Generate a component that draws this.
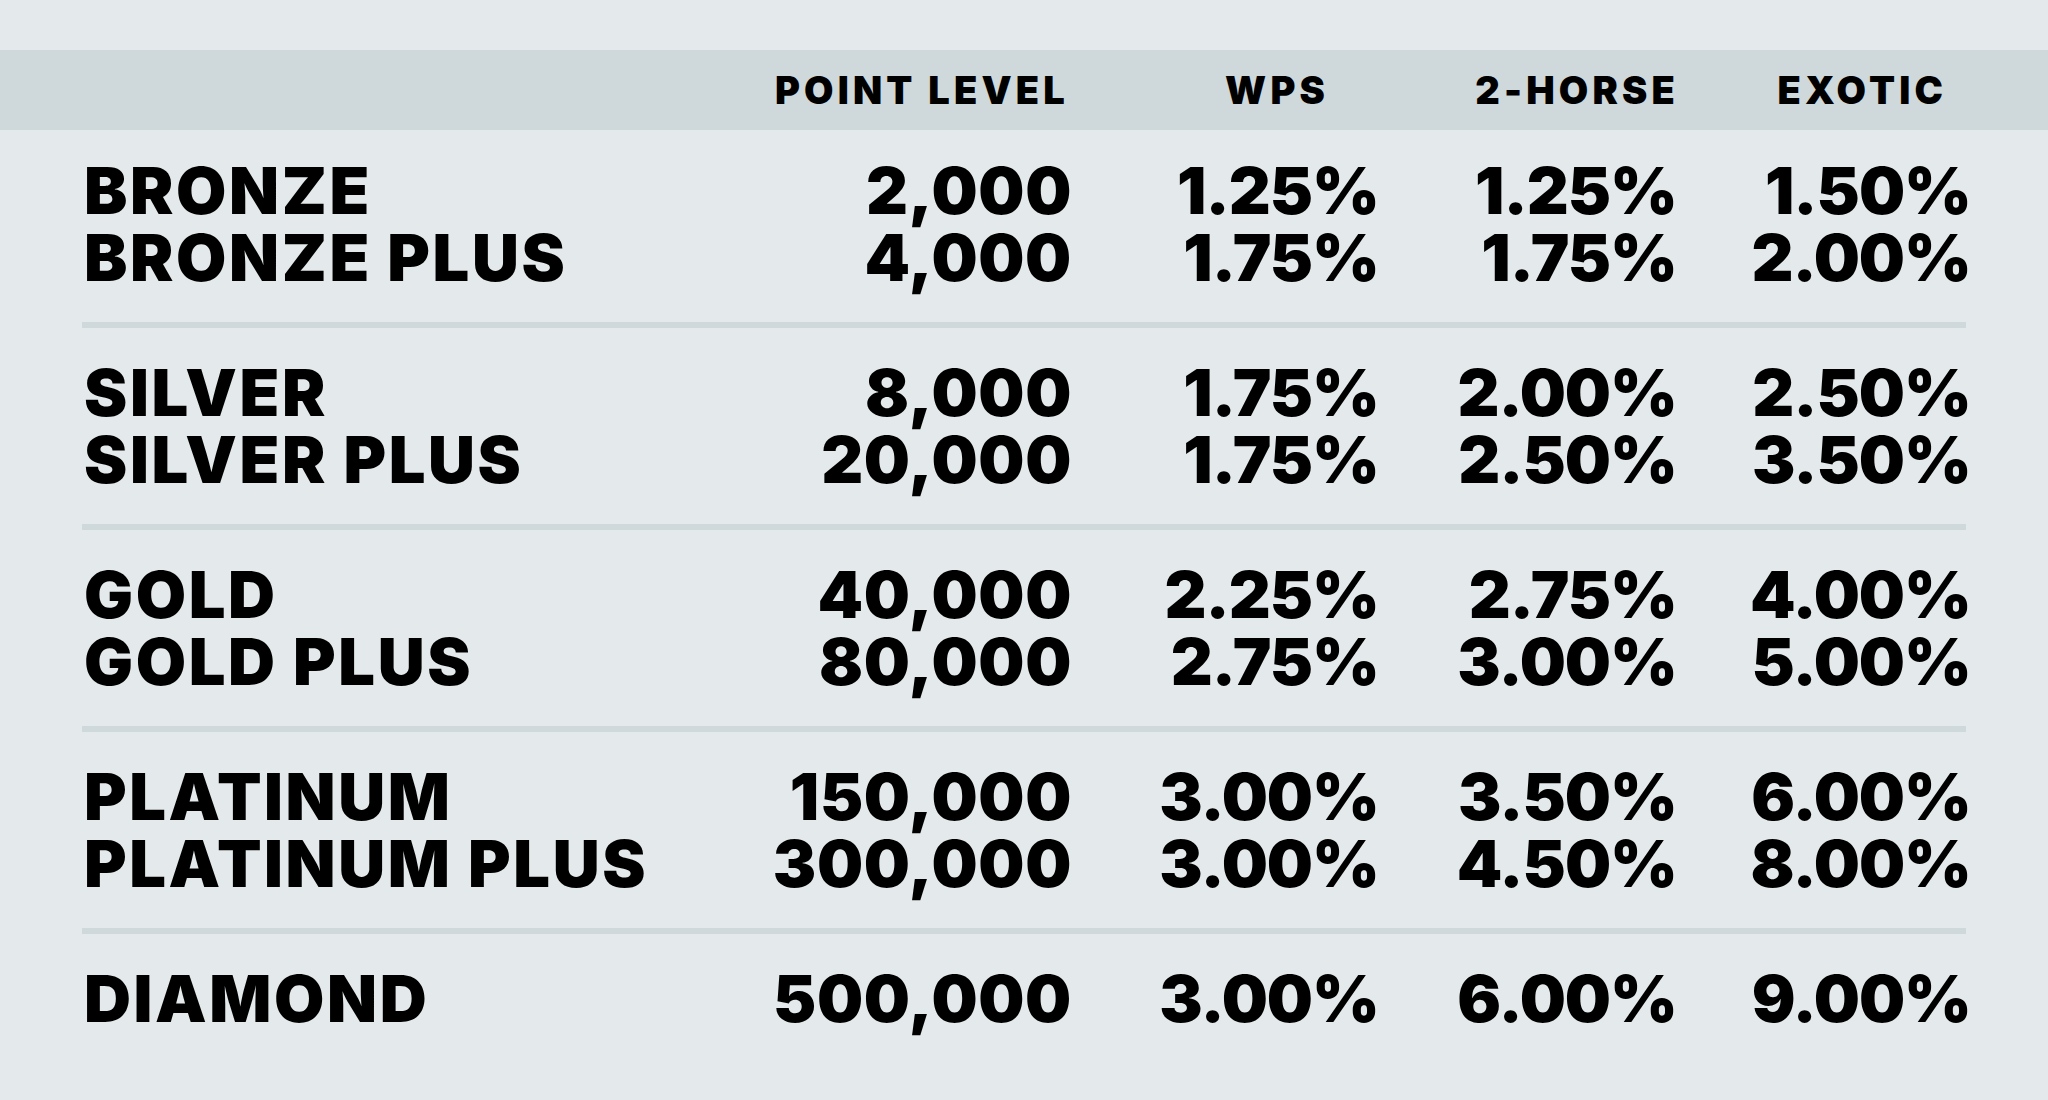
import React from "react";

type Tier = { name: string; points: string; wps: string; twoHorse: string; exotic: string };

const groups: Tier[][] = [
  [
    { name: "BRONZE", points: "2,000", wps: "1.25%", twoHorse: "1.25%", exotic: "1.50%" },
    { name: "BRONZE PLUS", points: "4,000", wps: "1.75%", twoHorse: "1.75%", exotic: "2.00%" },
  ],
  [
    { name: "SILVER", points: "8,000", wps: "1.75%", twoHorse: "2.00%", exotic: "2.50%" },
    { name: "SILVER PLUS", points: "20,000", wps: "1.75%", twoHorse: "2.50%", exotic: "3.50%" },
  ],
  [
    { name: "GOLD", points: "40,000", wps: "2.25%", twoHorse: "2.75%", exotic: "4.00%" },
    { name: "GOLD PLUS", points: "80,000", wps: "2.75%", twoHorse: "3.00%", exotic: "5.00%" },
  ],
  [
    { name: "PLATINUM", points: "150,000", wps: "3.00%", twoHorse: "3.50%", exotic: "6.00%" },
    { name: "PLATINUM PLUS", points: "300,000", wps: "3.00%", twoHorse: "4.50%", exotic: "8.00%" },
  ],
  [{ name: "DIAMOND", points: "500,000", wps: "3.00%", twoHorse: "6.00%", exotic: "9.00%" }],
];

const cols = "grid grid-cols-[1fr_300px_307px_298px_294px]";

export default function App() {
  return (
    <div
      className="min-h-screen w-full bg-[#e4eaeb] pt-[50px] text-black"
      style={{ fontFamily: "Inter, 'Liberation Sans', sans-serif" }}
    >
      <div className="bg-[#cfd8db] h-[80px] pl-[82px] pr-[77px]">
        <div className={`${cols} h-full items-center text-[38px] font-black tracking-[0.11em] leading-none`}>
          <div />
          <div className="text-right pr-[3px]">POINT LEVEL</div>
          <div className="text-right pr-[50px]">WPS</div>
          <div className="text-right -mr-[2px]">2-HORSE</div>
          <div className="text-right pr-[24px]">EXOTIC</div>
        </div>
      </div>

      <div className="pl-[82px] pr-[77px]">
        {groups.map((g, i) => (
          <React.Fragment key={i}>
            {i > 0 && <div className="h-[6px] bg-[#cfd8db] mr-[5px]" />}
            <div className={i === 0 ? "pt-[27px] pb-[31px]" : "pt-[31px] pb-[31px]"}>
              {g.map((t) => (
                <div key={t.name} className={`${cols} text-[65px] font-black leading-[67px]`}>
                  <div className="pl-[2px] tracking-[0.04em]">{t.name}</div>
                  <div className="text-right tracking-[0.01em]">{t.points}</div>
                  <div className="text-right tracking-[-0.015em]">{t.wps}</div>
                  <div className="text-right tracking-[-0.015em]">{t.twoHorse}</div>
                  <div className="text-right tracking-[-0.015em]">{t.exotic}</div>
                </div>
              ))}
            </div>
          </React.Fragment>
        ))}
      </div>
    </div>
  );
}
